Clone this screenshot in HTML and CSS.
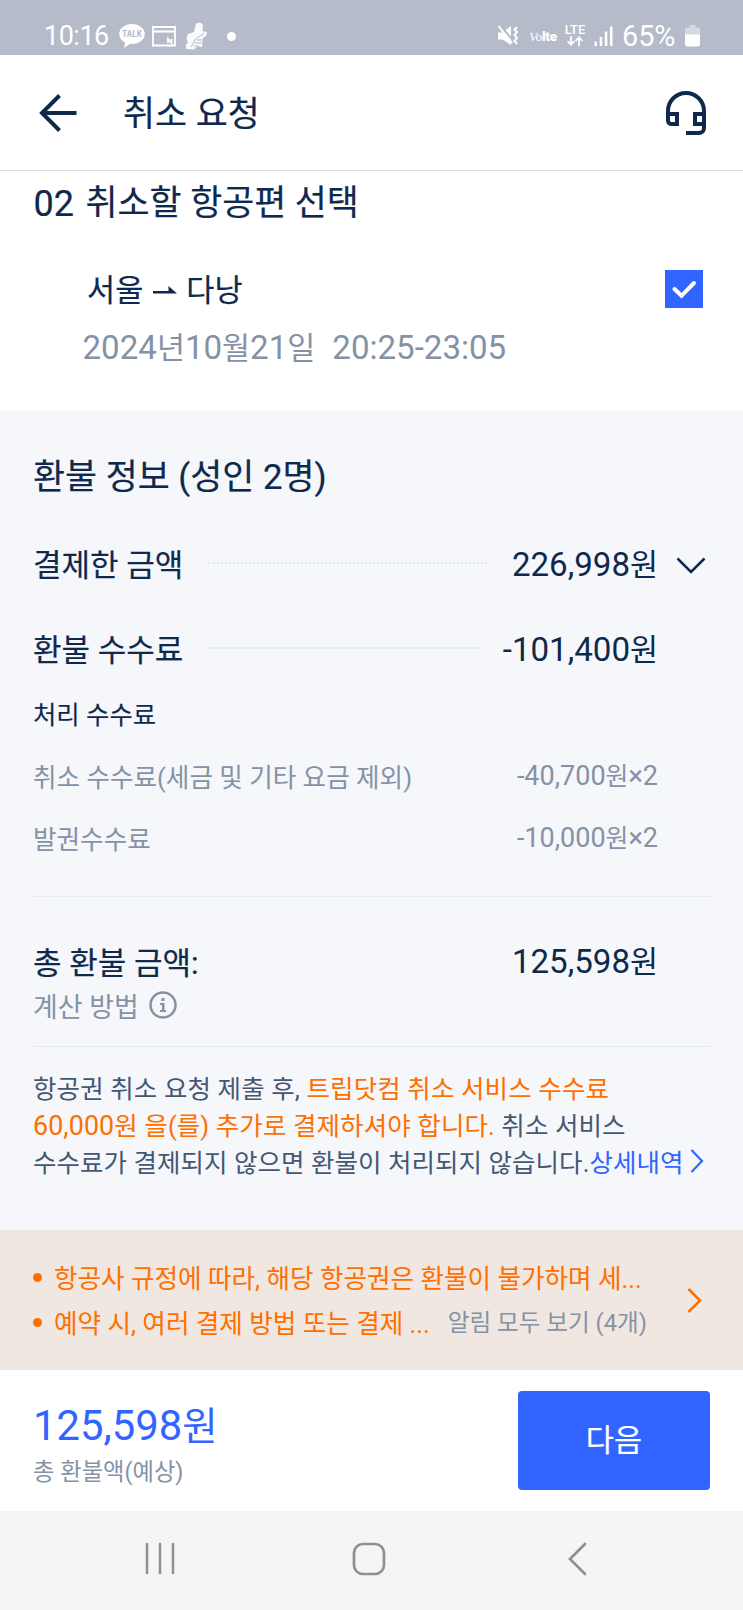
FILE: index.html
```html
<!DOCTYPE html>
<html lang="ko">
<head>
<meta charset="utf-8">
<title>취소 요청</title>
<link rel="stylesheet" href="styles.css">
</head>
<body>
<div class="screen">
  <div class="status">
    <div class="status-left">
      <span class="clock">10:16</span>
      <svg class="ic-talk" width="26" height="26" viewBox="0 0 26 26"><path fill="#fff" d="M13 1C6 1 .2 5.400 .2 11c0 3.600 2.400 6.700 6 8.500L5 25l6.200-4.200 1.800.2c7 0 12.800-4.400 12.800-10S20 1 13 1z"/><text x="13" y="14.200" text-anchor="middle" font-family="Roboto" font-weight="700" font-size="8.200" fill="#b5bbc8">TALK</text></svg>
      <svg class="ic-card" width="24" height="21" viewBox="0 0 24 21"><path fill="none" stroke="#fff" stroke-width="1.800" d="M1 1h22v18.500H1z"/><path stroke="#fff" stroke-width="2.200" d="M1 5.500h22"/><path fill="none" stroke="#fff" stroke-width="1.800" d="M16 17v-4l3.500 4v-4"/></svg>
      <svg class="ic-shoe" width="23" height="28" viewBox="0 0 23 28"><path fill="#fff" opacity=".92" d="M11 1.500l4-1 3 2-.5 6.500 4.500 1-1 4-3 2-1 9-5-.5-3 3-8-.5V22l2-1-1.500-5 1.500-4 6-2z"/><path fill="none" stroke="#b5bbc8" stroke-width="1" d="M19.500 11l-9 6-4.500 8M11.500 18h7M9.500 21h8M8.500 24h6"/></svg>
      <span class="dot"></span>
    </div>
    <div class="status-right">
      <svg class="ic-mute" width="22" height="22" viewBox="0 0 22 22"><path fill="#fff" d="M1 7.500h4.500L14 1v19L5.500 14.500H1z"/><path fill="none" stroke="#b5bbc8" stroke-width="2" d="M3 0l13 15.500"/><path fill="none" stroke="#fff" stroke-width="2" d="M1.500 1l13.500 17M20 2l-2.500 2.500L20 7l-2.500 3 2.500 3-2.500 3 2.500 3"/></svg>
      <span class="volte"><i>Vo</i><b>lte</b></span>
      <span class="lte"><b>LTE</b><svg width="18" height="10" viewBox="0 0 18 10"><path fill="none" stroke="#fff" stroke-width="1.800" d="M5 0v8.500M1.500 5L5 8.700 8.500 5M13 10V1.500M9.500 5L13 1.300 16.500 5"/></svg></span>
      <svg class="ic-signal" width="19" height="20" viewBox="0 0 19 20"><path fill="#fff" d="M.5 15.500H3V20H.5zM5.700 11h2.500v9H5.700zM10.800 5.500h2.500V20h-2.500zM16 .5h2.500V20H16z"/></svg>
      <span class="pct">65%</span>
      <svg class="ic-batt" width="15" height="22" viewBox="0 0 15 22"><path fill="#fff" opacity=".45" d="M4.500 0h6v2.500H13a2 2 0 0 1 2 2V10H0V4.500a2 2 0 0 1 2-2h2.500z"/><path fill="#fff" d="M0 9.500h15v10a2 2 0 0 1-2 2H2a2 2 0 0 1-2-2z"/></svg>
    </div>
  </div>

  <header class="header">
    <svg class="ic-back" width="38" height="38" viewBox="0 0 38 38"><path fill="none" stroke="#0f294d" stroke-width="4" d="M20.500 1.500L3 19l17.500 17.500M3 19h34.500"/></svg>
    <h1 class="title">취소 요청</h1>
    <svg class="ic-head" width="40" height="44" viewBox="0 0 40 44"><path fill="none" stroke="#0f294d" stroke-width="4" d="M2 23V20a18 18 0 0 1 36 0v17a5 5 0 0 1-5 5H20M2 23h9v10H5.500A3.500 3.500 0 0 1 2 29.500zM38 23h-9v10h9"/></svg>
  </header>

  <section class="flight">
    <h2 class="step"><span class="num">02</span>취소할 항공편 선택</h2>
    <div class="route-row">
      <div class="route"><span>서울</span><svg class="ic-arrow" width="24" height="8" viewBox="0 0 24 8"><path fill="#0f294d" d="M0 5h15.500V0L24 7.500H0z"/></svg><span>다낭</span></div>
      <div class="check"><svg width="38" height="38" viewBox="0 0 38 38"><path fill="none" stroke="#fff" stroke-width="4" stroke-linecap="round" d="M9.500 19l7 6.800L29 13"/></svg></div>
    </div>
    <div class="date">2024<span class="ko">년</span>10<span class="ko">월</span>21<span class="ko">일</span><span class="time">20:25-23:05</span></div>
  </section>

  <section class="refund">
    <h2 class="refund-title">환불 정보 (성인 2명)</h2>
    <div class="row main"><span class="label">결제한 금액</span><span class="dots"></span><span class="value">226,998<span class="ko">원</span></span>
      <svg class="ic-down" width="30" height="18" viewBox="0 0 30 18"><path fill="none" stroke="#0f294d" stroke-width="2.500" d="M1.500 2.500L15 16 28.500 2.500"/></svg></div>
    <div class="row main"><span class="label">환불 수수료</span><span class="dots"></span><span class="value">-101,400<span class="ko">원</span></span></div>
    <div class="row sub">처리 수수료</div>
    <div class="row item"><span>취소 수수료(세금 및 기타 요금 제외)</span><span class="small-value">-40,700<span class="ko">원</span>×2</span></div>
    <div class="row item"><span>발권수수료</span><span class="small-value">-10,000<span class="ko">원</span>×2</span></div>
    <div class="divider"></div>
    <div class="row total"><span class="label">총 환불 금액:</span><span class="value">125,598<span class="ko">원</span></span></div>
    <div class="method"><span>계산 방법</span><svg class="ic-info" width="28" height="28" viewBox="0 0 28 28"><circle cx="14" cy="14" r="12.500" fill="none" stroke="#8592a6" stroke-width="2.500"/><path fill="#8592a6" d="M12.500 7h3v3h-3zM11 12h4.500v7H17v2h-6v-2h2v-5h-2z"/></svg></div>
    <div class="note">
      <div class="line l1">항공권 취소 요청 제출 후, <em>트립닷컴 취소 서비스 수수료</em></div>
      <div class="line l2"><em><span class="fee">60,000</span>원 을(를) 추가로 결제하셔야 합니다.</em> 취소 서비스</div>
      <div class="line l3">수수료가 결제되지 않으면 환불이 처리되지 않습니다.<a class="detail">상세내역<svg width="14" height="24" viewBox="0 0 14 24"><path fill="none" stroke="#3264ff" stroke-width="2.200" d="M1.500 1L12 12 1.500 23"/></svg></a></div>
    </div>
  </section>

  <section class="alerts">
    <div class="alert-list">
      <div class="alert"><span class="bullet"></span><span class="alert-text">항공사 규정에 따라, 해당 항공권은 환불이 불가하며 세...</span></div>
      <div class="alert"><span class="bullet"></span><span class="alert-text">예약 시, 여러 결제 방법 또는 결제 ...</span><span class="more">알림 모두 보기 (4개)</span></div>
    </div>
    <svg class="ic-next" width="15" height="25" viewBox="0 0 15 25"><path fill="none" stroke="#ff6f00" stroke-width="2.500" d="M1.500 1L13 12.500 1.500 24"/></svg>
  </section>

  <footer class="pay">
    <div class="sum"><div class="amount">125,598<span class="ko">원</span></div><div class="caption">총 환불액(예상)</div></div>
    <button class="next">다음</button>
  </footer>

  <nav class="nav">
    <svg width="30" height="34" viewBox="0 0 30 34"><path fill="none" stroke="#8f8f90" stroke-width="2.500" stroke-linecap="round" d="M2 2v29M15 2v29M28 2v29"/></svg>
    <svg class="ic-home" width="34" height="34" viewBox="0 0 34 34"><rect x="2" y="2" width="30" height="30" rx="9" fill="none" stroke="#8f8f90" stroke-width="2.700"/></svg>
    <svg width="20" height="34" viewBox="0 0 20 34"><path fill="none" stroke="#8f8f90" stroke-width="2.700" stroke-linecap="round" d="M18 2L3 17l15 15"/></svg>
  </nav>
</div>
</body>
</html>
```
FILE: styles.css
```css
* { box-sizing: border-box; margin: 0; padding: 0; }
body {
  width: 743px;
  font-family: Roboto, "Noto Sans CJK KR", sans-serif;
  font-weight: 400;
  color: #0f294d;
  background: #fff;
  white-space: nowrap;
}
svg { display: block; flex: none; }
h1, h2 { font-weight: 400; -webkit-text-stroke: 0.2px currentColor; }
em { font-style: normal; color: #ff6f00; }
.ko { font-size: 0.92em; }
.screen { width: 743px; height: 1610px; overflow: hidden; display: flex; flex-direction: column; }

.status {
  height: 55px; background: #b5bbc8; color: #fff;
  display: flex; justify-content: space-between;
  padding: 17px 43px 0 44px;
}
.status-left, .status-right { display: flex; align-items: center; height: 38px; }
.clock { font-size: 27px; width: 65px; letter-spacing: -0.5px; }
.ic-talk { margin-left: 10px; }
.ic-card { margin-left: 7px; }
.ic-shoe { margin-left: 9px; }
.dot { width: 9px; height: 9px; border-radius: 50%; background: #fff; margin-left: 19px; }
.volte { font-size: 13.5px; width: 28px; margin-left: 10px; letter-spacing: -0.3px; }
.volte i { font-family: "Liberation Serif", serif; }
.volte b { font-weight: 900; }
.lte { display: flex; flex-direction: column; align-items: center; margin-left: 7px; font-size: 13px; line-height: 13px; width: 22px; padding-bottom: 3px; }
.lte b { font-weight: 500; }
.ic-signal { margin-left: 8px; }
.pct { font-size: 28.8px; margin-left: 9px; width: 59px; letter-spacing: 0; }
.ic-batt { margin-left: 4px; }

.header { height: 116px; border-bottom: 1px solid #d5dae3; display: flex; align-items: center; padding: 0 37px 0 39px; }
.title { font-size: 34.8px; margin-left: 46px; flex: 1; padding-bottom: 3px; }

.flight { height: 239px; padding: 0 40px 0 34px; }
.step { height: 66px; line-height: 64px; font-size: 34.8px; display: flex; }
.num { font-size: 36px; width: 52px; line-height: 67px; margin-left: -0.5px; }
.route-row { margin-top: 22px; height: 60px; display: flex; align-items: center; justify-content: space-between; padding-left: 53px; }
.route { font-size: 30.6px; display: flex; align-items: center; padding-bottom: 3px; -webkit-text-stroke: 0.2px currentColor; }
.ic-arrow { margin: 4px 9px 0 10px; }
.check { width: 38px; height: 38px; background: #3264ff; }
.date { height: 56px; line-height: 57px; font-size: 33.1px; color: #8592a6; padding-left: 48.5px; }
.time { margin-left: 17px; }

.refund { height: 820px; background: #f5f7fb; padding: 38px 33px 0; }
.refund-title { font-size: 34.8px; height: 60px; line-height: 58px; margin-bottom: 12px; }
.row { display: flex; align-items: center; justify-content: space-between; padding-right: 52px; }
.main { height: 85px; padding-right: 4px; }
.label { font-size: 31px; -webkit-text-stroke: 0.2px currentColor; }
.value { font-size: 33.1px; }
.dots { flex: 1; border-top: 2px dotted #e0e4eb; margin: 0 25px; }
.ic-down { margin-left: 18px; margin-top: 4px; }
.main:nth-of-type(2) { padding-right: 52px; }
.sub { height: 46px; font-size: 25.4px; margin-bottom: 8px; -webkit-text-stroke: 0.1px currentColor; }
.item { height: 62px; font-size: 25.6px; color: #8592a6; }
.small-value { font-size: 27px; padding-bottom: 3px; }
.divider { height: 1px; background: #e6e9ef; margin: 28px 0 37px; }
.total { height: 52px; }
.method { height: 39px; display: flex; align-items: center; font-size: 26.9px; color: #8592a6; }
.ic-info { margin-left: 10px; margin-top: -2px; }
.note { border-top: 1px solid #e6e9ef; margin-top: 21px; padding-top: 24px; font-size: 25.5px; line-height: 37.2px; color: #455873; letter-spacing: 0.07px; }
.line { display: flex; white-space: pre; }
.l1 { letter-spacing: 0.14px; }
.l2 { letter-spacing: 0.12px; }
.fee { font-size: 26.8px; }
.detail { color: #3264ff; display: flex; align-items: center; gap: 6px; }
.detail svg { margin-top: -6px; }

.alerts { height: 140px; background: #f0e7e0; color: #ff6f00; display: flex; align-items: center; justify-content: space-between; padding: 0 41px 0 33px; }
.alert { height: 45px; display: flex; align-items: center; font-size: 25.6px; }
.bullet { width: 9px; height: 9px; border-radius: 50%; background: #ff6f00; margin-right: 12px; }
.alert-text { padding-bottom: 2px; }
.more { color: #8592a6; font-size: 23.6px; margin-left: 18px; padding-bottom: 3px; }

.pay { height: 141px; display: flex; justify-content: space-between; align-items: center; padding: 0 33px; }
.sum { padding-top: 10px; }
.amount { font-size: 41.8px; line-height: 52px; color: #3264ff; }
.caption { font-size: 23.3px; line-height: 38px; color: #8592a6; }
.next { width: 192px; height: 99px; border: 0; border-radius: 4px; background: #3264ff; color: #fff; font-family: inherit; font-size: 30.6px; padding-bottom: 6px; -webkit-text-stroke: 0.2px #fff; }

.nav { height: 99px; background: #f5f5f8; display: flex; align-items: center; justify-content: space-between; padding: 0 156px 4px 145px; }
.ic-home { margin-right: 5px; }
```
